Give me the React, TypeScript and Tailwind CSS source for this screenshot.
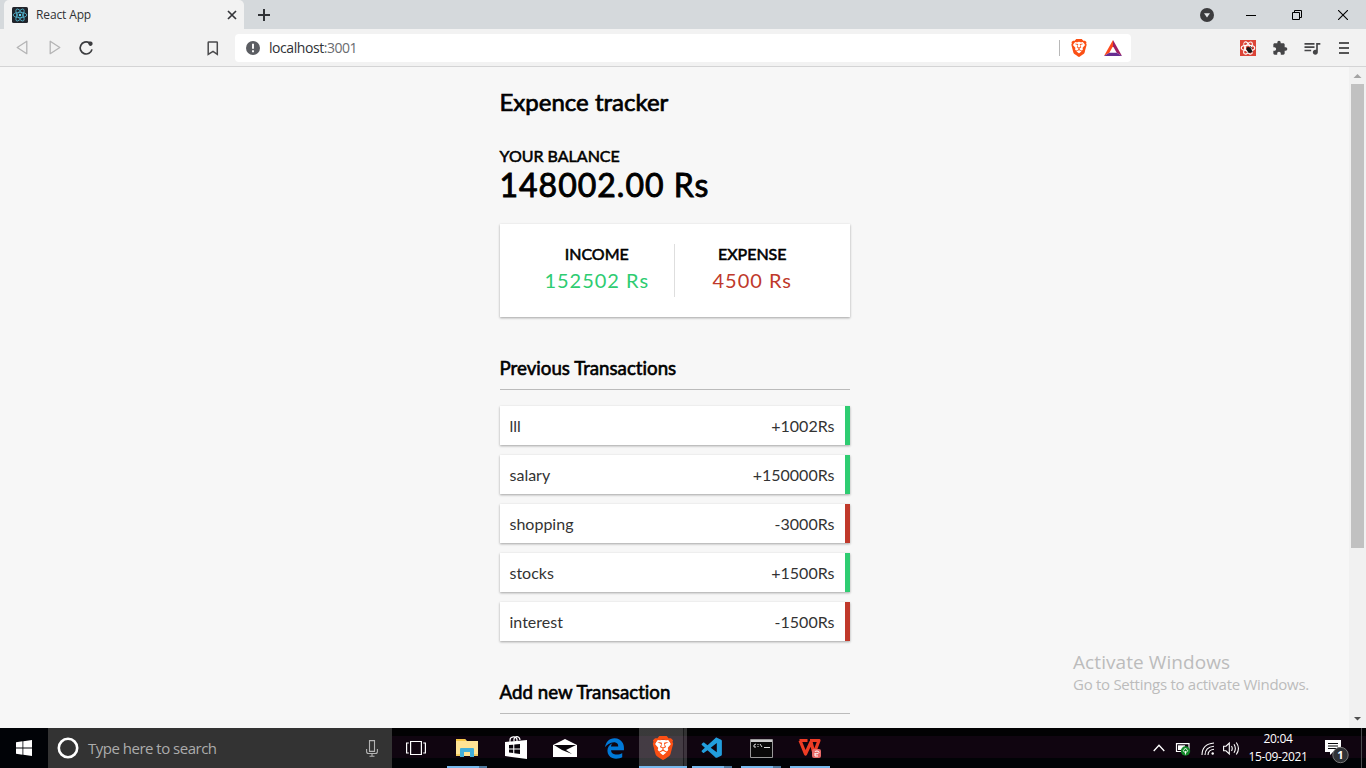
import React from "react";
import { MdExtension, MdQueueMusic } from "react-icons/md";
import { FaEdgeLegacy } from "react-icons/fa6";
import { SiBrave } from "react-icons/si";
import { VscVscode } from "react-icons/vsc";

type Transaction = { name: string; amount: string; income: boolean };

const transactions: Transaction[] = [
  { name: "lll", amount: "+1002Rs", income: true },
  { name: "salary", amount: "+150000Rs", income: true },
  { name: "shopping", amount: "-3000Rs", income: false },
  { name: "stocks", amount: "+1500Rs", income: true },
  { name: "interest", amount: "-1500Rs", income: false },
];

function ReactIcon() {
  return (
    <svg width="16" height="16" viewBox="0 0 16 16">
      <rect width="16" height="16" rx="1.5" fill="#20232a" />
      <g fill="none" stroke="#53b9d3" strokeWidth="0.8">
        <ellipse cx="8" cy="8" rx="6.8" ry="2.7" />
        <ellipse cx="8" cy="8" rx="6.8" ry="2.7" transform="rotate(60 8 8)" />
        <ellipse cx="8" cy="8" rx="6.8" ry="2.7" transform="rotate(120 8 8)" />
      </g>
      <circle cx="8" cy="8" r="1.2" fill="#61dafb" />
    </svg>
  );
}

function BraveIcon({ size }: { size: number }) {
  return (
    <svg width={size} height={size} viewBox="0 0 24 24">
      <path d="M6 4 L18 4 L20 8 L18 16 L12 21 L6 16 L4 8Z" fill="#fff" />
      <SiBrave size={24} color="#fb4f14" />
    </svg>
  );
}

function TabStrip() {
  return (
    <div className="flex h-[29px] bg-[#d5d9dc] pl-1">
      <div className="flex w-[240px] items-center rounded-t-[5px] bg-[#f2f2f2] pl-2 pr-[7px] pt-px">
        <ReactIcon />
        <span className="ml-2 flex-1 text-[12px] tracking-[-0.13px] text-[#303236]">React App</span>
        <svg width="10" height="10" viewBox="0 0 10 10" stroke="#35363a" strokeWidth="1.7">
          <path d="M1 1L9 9M9 1L1 9" />
        </svg>
      </div>
      <svg className="ml-3.5 mt-[9px]" width="12" height="12" viewBox="0 0 12 12" stroke="#303236" strokeWidth="2">
        <path d="M6 0V12M0 6H12" />
      </svg>
      <div className="ml-auto flex items-center pr-[18px]">
        <svg className="mt-px" width="14" height="14" viewBox="0 0 14 14">
          <circle cx="7" cy="7" r="7" fill="#3c3c3e" />
          <path d="M4 5.2H10L7 9.4Z" fill="#e4e7e9" />
        </svg>
        <svg className="ml-8" width="10" height="10" viewBox="0 0 10 10">
          <path d="M0 5.5H10" stroke="#000" />
        </svg>
        <svg className="ml-9" width="10" height="10" viewBox="0 0 10 10" fill="none" stroke="#000">
          <path d="M.5 2.5H7.5V9.5H.5ZM2.5 2.5V.5H9.5V7.5H7.5" />
        </svg>
        <svg className="ml-9" width="10" height="10" viewBox="0 0 10 10" stroke="#000" strokeWidth="1.1">
          <path d="M0 0L10 10M10 0L0 10" />
        </svg>
      </div>
    </div>
  );
}

function Toolbar() {
  return (
    <div className="flex h-[38px] items-center border-b border-[#d4d4d5] bg-[#f2f2f2] pl-4">
      <svg width="12" height="15" viewBox="0 0 12 15" fill="none" stroke="#b4b4b5" strokeWidth="1.3" strokeLinejoin="round">
        <path d="M10.8 1.3V13.7L1.2 7.5Z" />
      </svg>
      <svg className="ml-[21px]" width="12" height="15" viewBox="0 0 12 15" fill="none" stroke="#b4b4b5" strokeWidth="1.3" strokeLinejoin="round">
        <path d="M1.2 1.3V13.7L10.8 7.5Z" />
      </svg>
      <svg className="ml-[17px]" width="16" height="16" viewBox="0 0 16 16" fill="none">
        <path d="M11.4 2.9A6 6 0 1 0 14 9.4" stroke="#3b3c3f" strokeWidth="1.7" />
        <path d="M9.4 2.6C10.5 1 14.5.8 14.6 3.2C14.8 5.6 12.5 6.5 11.3 5.5C10.5 4.8 10.6 3.8 9.4 2.6Z" fill="#3b3c3f" />
      </svg>
      <svg className="ml-[113px] mt-0.5" width="12" height="15" viewBox="0 0 12 15" fill="none" stroke="#4a4a4c" strokeWidth="1.5">
        <path d="M1.8 1H9.7Q10.3 1 10.3 1.6V13.4L6 10.3L1.2 13.4V1.6Q1.2 1 1.8 1Z" />
      </svg>
      <div className="ml-4 flex h-7 w-[896px] items-center rounded-[4px] bg-white pl-[11px]">
        <svg width="14" height="14" viewBox="0 0 14 14">
          <circle cx="7" cy="7" r="7" fill="#5b5d62" />
          <path d="M7 2.8V7.8M7 9.3V11.2" stroke="#fff" strokeWidth="1.9" />
        </svg>
        <span className="ml-[9px] flex-1 text-[14px] tracking-[-0.44px] text-[#303236]">
          localhost<span className="text-[#6a6c70]">:3001</span>
        </span>
        <div className="h-4 w-px bg-[#b8b8b8]" />
        <div className="ml-[10px]">
          <BraveIcon size={18} />
        </div>
        <svg className="ml-4 mr-[9px]" width="18" height="16" viewBox="0 0 18 16">
          <path d="M9 0L0 16L5.3 12.7L9 6.3Z" fill="#ff4a1c" />
          <path d="M9 0L18 16L12.7 12.7L9 6.3Z" fill="#9e1f63" />
          <path d="M0 16H18L12.7 12.7H5.3Z" fill="#662d91" />
        </svg>
      </div>
      <svg className="ml-[109px]" width="16" height="16" viewBox="0 0 16 16">
        <rect width="16" height="16" fill="#dc4437" />
        <g fill="none" stroke="#fff" strokeWidth="1.1">
          <ellipse cx="8" cy="8" rx="6.8" ry="2.7" />
          <ellipse cx="8" cy="8" rx="6.8" ry="2.7" transform="rotate(60 8 8)" />
          <ellipse cx="8" cy="8" rx="6.8" ry="2.7" transform="rotate(120 8 8)" />
        </g>
        <ellipse cx="9.3" cy="10" rx="2.2" ry="3.2" fill="#161616" transform="rotate(-35 9.3 10)" />
        <path d="M6 9L13 12M8 13L11 7M10 6L12.5 9M6.5 7L8 8" stroke="#161616" strokeWidth=".7" />
      </svg>
      <MdExtension className="ml-4" size={16} color="#454547" />
      <MdQueueMusic className="ml-[14px]" size={20} color="#454547" />
      <svg className="ml-[17px]" width="10" height="12" viewBox="0 0 10 12" stroke="#555" strokeWidth="1.8">
        <path d="M0 1H10M0 6H10M0 11H10" />
      </svg>
    </div>
  );
}

function SectionTitle({ children }: { children: React.ReactNode }) {
  return (
    <h3 className="mt-10 border-b border-[#bbb] pb-2.5 text-[18.72px] leading-[22px] [-webkit-text-stroke:0.6px_black]">
      {children}
    </h3>
  );
}

function Tracker() {
  return (
    <main className="w-[350px] pt-[20px] font-['Lato',sans-serif] text-black [font-variant-ligatures:none]">
      <h2 className="text-[24px] leading-[29px] [-webkit-text-stroke:0.7px_black]">Expence tracker</h2>
      <h4 className="mt-[30px] text-[16px] leading-[19px] [-webkit-text-stroke:0.55px_black]">YOUR BALANCE</h4>
      <h1 className="mt-px text-[32px] leading-[38px] tracking-[1px] [-webkit-text-stroke:0.9px_black]">148002.00 Rs</h1>
      <section className="mt-5 flex bg-white p-5 text-center shadow-[0_1px_3px_rgba(0,0,0,0.12),0_1px_2px_rgba(0,0,0,0.24)]">
        <div className="flex-1 border-r border-[#dedede]">
          <h4 className="text-[16px] leading-[19.2px] [-webkit-text-stroke:0.55px_black]">INCOME</h4>
          <p className="my-[5px] text-[20px] leading-6 tracking-[1px] whitespace-nowrap text-[#2ecc71]">152502 Rs</p>
        </div>
        <div className="flex-1">
          <h4 className="text-[16px] leading-[19.2px] [-webkit-text-stroke:0.55px_black]">EXPENSE</h4>
          <p className="my-[5px] text-[20px] leading-6 tracking-[1px] text-[#c0392b]">4500 Rs</p>
        </div>
      </section>
      <SectionTitle>Previous Transactions</SectionTitle>
      <ul className="mt-4 flex flex-col gap-2.5">
        {transactions.map((t) => (
          <li
            key={t.name}
            className={`flex h-[39px] items-center justify-between border-r-[5px] bg-white px-2.5 text-[16px] leading-[19px] text-[#333] shadow-[0_1px_3px_rgba(0,0,0,0.12),0_1px_2px_rgba(0,0,0,0.24)] ${
              t.income ? "border-[#2ecc71]" : "border-[#c0392b]"
            }`}
          >
            <span>{t.name}</span>
            <span>{t.amount}</span>
          </li>
        ))}
      </ul>
      <SectionTitle>Add new Transaction</SectionTitle>
    </main>
  );
}

function Scrollbar() {
  return (
    <div className="flex w-[17px] flex-col items-center bg-[#f1f1f1]">
      <svg className="shrink-0" width="17" height="17" viewBox="0 0 17 17">
        <path d="M4.5 11H12.5L8.5 7Z" fill="#a3a3a3" />
      </svg>
      <div className="h-[464px] w-[13px] bg-[#c1c1c1]" />
      <svg className="mt-auto shrink-0" width="17" height="17" viewBox="0 0 17 17">
        <path d="M5 6H12L8.5 9.5Z" fill="#505050" />
      </svg>
    </div>
  );
}

type TaskButtonProps = { children: React.ReactNode; running?: boolean; stacked?: boolean; active?: boolean };

function TaskButton({ children, running, stacked, active }: TaskButtonProps) {
  return (
    <div className={`flex h-10 w-12 flex-col items-center ${active ? "bg-[linear-gradient(90deg,#ffffff38_44px,#ffffff18_44px_45px,#ffffff30_45px)]" : ""}`}>
      <div className="flex flex-1 items-center justify-center pt-0.5">{children}</div>
      <div className={`flex h-0.5 justify-end ${active ? "w-12" : "w-10"} ${running ? "bg-[#76b9ed]" : ""}`}>
        {stacked && <div className="w-2 bg-[#4f7ba0]" />}
      </div>
    </div>
  );
}

function Taskbar() {
  return (
    <footer className="flex h-10 bg-[linear-gradient(#020203_0_8px,#100510_8px_30px,#010306_30px)] text-white">
      <div className="flex w-12 items-center justify-center bg-[#010307]">
        <svg width="16" height="16" viewBox="0 0 16 16" fill="#fff">
          <path d="M0 2.2L6.5 1.3V7.5H0ZM7.3 1.2L16 0V7.5H7.3ZM0 8.4H6.5V14.7L0 13.8ZM7.3 8.4H16V16L7.3 14.8Z" />
        </svg>
      </div>
      <div className="flex w-[344px] items-center bg-[#333] pl-[9px] pr-[14px]">
        <svg width="22" height="22" viewBox="0 0 22 22">
          <circle cx="11" cy="11" r="9.2" fill="none" stroke="#fff" strokeWidth="2.6" />
        </svg>
        <span className="ml-[9px] flex-1 pt-px text-[15px] tracking-[-0.5px] text-[#acacac]">Type here to search</span>
        <svg width="12" height="17" viewBox="0 0 12 17" fill="none" stroke="#b3b3b3" strokeWidth="1.1">
          <path d="M3.5.6H8.5V11.4H3.5ZM.6 9V11.5Q.6 13.5 2.5 13.5H9.5Q11.4 13.5 11.4 11.5V9M6 13.5V16M3.5 16.2H8.5" />
        </svg>
      </div>
      <TaskButton>
        <svg width="20" height="16" viewBox="0 0 20 16" fill="none" stroke="#fff" strokeWidth="1.2">
          <path d="M4.6 1.5H15.4V14.5H4.6ZM2.8 3H.6V13H2.8M17.2 3H19.4V13H17.2" />
        </svg>
      </TaskButton>
      <div className="ml-[3px] flex gap-px">
        <TaskButton running stacked>
          <svg width="22" height="20" viewBox="0 0 22 20">
            <path d="M0 1H9L11 3H22V18H0Z" fill="#ffe394" />
            <path d="M0 1H9L10 3H0Z" fill="#f5c646" />
            <path d="M4 19V11Q4 10 5 10H17Q18 10 18 11V19H14V14H8V19Z" fill="#42afd9" />
            <path d="M0 16H4V18H0ZM18 16H22V18H18Z" fill="#f2ca5d" />
          </svg>
        </TaskButton>
        <TaskButton>
          <svg width="22" height="24" viewBox="0 0 22 24">
            <path d="M0 6L22 4V23L0 20Z" fill="#fff" />
            <path d="M5 6V4C5 .5 11-.5 12 3.5V5M9 5.5V3C10-.5 14.5 0 15 4" fill="none" stroke="#fff" strokeWidth="1.2" />
            <path d="M4 9L8.2 8.7V12.4H4ZM9.3 8.6L15 8.1V12.4H9.3ZM4 13.5H8.2V17.1L4 16.6ZM9.3 13.5H15V18L9.3 17.3Z" fill="#08040a" />
          </svg>
        </TaskButton>
        <TaskButton>
          <svg width="24" height="20" viewBox="0 0 24 20">
            <path d="M0 7L12 1L24 7V19H0Z" fill="#fff" />
            <path d="M1 7H23L13 12L19 16L9 12Z" fill="#08040a" />
          </svg>
        </TaskButton>
        <TaskButton>
          <FaEdgeLegacy size={21} color="#0078d7" />
        </TaskButton>
        <TaskButton running active>
          <BraveIcon size={24} />
        </TaskButton>
        <TaskButton running stacked>
          <VscVscode size={25} color="#229edd" />
        </TaskButton>
        <TaskButton running stacked>
          <svg width="23" height="19" viewBox="0 0 23 19">
            <path d="M.5.5H22.5V18.5H.5Z" fill="#090909" stroke="#999" />
            <path d="M1 1H22V3H1Z" fill="#ccc" />
            <path d="M6 5L4 6V8H6M8 5V6M8 7V8M10 5L12 8M14 8.5H20" stroke="#ddd" fill="none" />
          </svg>
        </TaskButton>
        <TaskButton running>
          <svg width="24" height="20" viewBox="0 0 24 20">
            <path d="M1.5 2.5H9.5M2 2.5L7.5 16L13 4L16 15.5L21 2.5H12" fill="none" stroke="#ee3c24" strokeWidth="3.2" strokeLinejoin="round" />
            <rect x="14" y="11" width="9" height="9" rx="2" fill="#e66866" />
            <path d="M17 14Q17 13 19 13Q21 13 21 14.5Q21 16 17 16M17 15V18H20" stroke="#fff" fill="none" />
          </svg>
        </TaskButton>
      </div>
      <div className="ml-auto flex items-center">
        <svg width="12" height="8" viewBox="0 0 12 8" fill="none" stroke="#fff" strokeWidth="1.3">
          <path d="M.7 7L6 1.3L11.3 7" />
        </svg>
        <svg className="ml-[10px] mt-0.5" width="16" height="13" viewBox="0 0 16 13">
          <path d="M1.5.7H14V8.5H1.5Z" fill="none" stroke="#fff" strokeWidth="1.2" />
          <path d="M3 2.3H10V7H3Z" fill="#fff" />
          <circle cx="10.5" cy="8" r="4.7" fill="#14892a" />
          <path d="M10.5 5L8.3 7.7L9.6 9.3H11.4L12.7 7.7ZM10.5 8V11.5" stroke="#fff" strokeWidth=".9" fill="none" />
        </svg>
        <svg className="ml-[10px] mt-0.5" width="14" height="14" viewBox="0 0 14 14" fill="none" stroke="#fff" strokeWidth="1.1">
          <path d="M1 13Q1 2 13 1M4 13Q4 5 13 4.2M7 13Q7 8 13 7.3" />
          <circle cx="11.7" cy="11.5" r="1.2" fill="#fff" stroke="none" />
        </svg>
        <svg className="ml-2" width="17" height="15" viewBox="0 0 17 15" fill="none" stroke="#fff" strokeWidth="1.1">
          <path d="M.6 5.2H3L6.3 2V13L3 9.8H.6ZM8.5 5Q10 7.5 8.5 10M11 3.3Q13.7 7.5 11 11.7M13.3 1.5Q17.6 7.5 13.3 13.5" />
        </svg>
        <div className="ml-[8px] flex w-[60px] flex-col items-center text-[12px] leading-[18px] tracking-[-0.35px] whitespace-nowrap">
          <span>20:04</span>
          <span>15-09-2021</span>
        </div>
        <svg className="ml-[16px] mt-[9px]" width="26" height="27" viewBox="0 0 26 27">
          <path d="M1 1H17V13H9L6 16V13H1Z" fill="#fff" />
          <path d="M4 4.5H14M4 7H14M4 9.5H12" stroke="#07080b" />
          <circle cx="16.5" cy="16" r="7.7" fill="#303236" stroke="#777" />
          <text x="16.5" y="20" textAnchor="middle" fill="#fff" fontSize="11" fontWeight="700">1</text>
        </svg>
        <div className="ml-[11px] mr-1 h-10 w-px bg-[#4a4b4e]" />
      </div>
    </footer>
  );
}

export default function App() {
  return (
    <div className="relative flex h-[768px] w-[1366px] flex-col overflow-hidden bg-[#f7f7f7] font-['Open_Sans',sans-serif]">
      <TabStrip />
      <Toolbar />
      <div className="flex min-h-0 flex-1">
        <div className="flex flex-1 justify-center overflow-hidden">
          <Tracker />
        </div>
        <Scrollbar />
      </div>
      <Taskbar />
      <div className="absolute left-[1073px] top-[650px] whitespace-nowrap text-[#bcbcbc]">
        <p className="text-[19px] leading-[24px] tracking-[0.08px]">Activate Windows</p>
        <p className="text-[15px] leading-[21px] tracking-[-0.28px]">Go to Settings to activate Windows.</p>
      </div>
    </div>
  );
}
